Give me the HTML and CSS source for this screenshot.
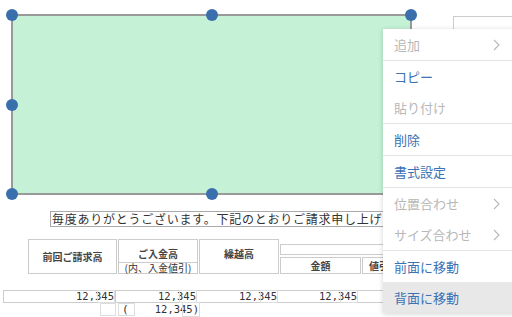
FILE: index.html
```html
<!DOCTYPE html>
<html lang="ja">
<head>
    <meta charset="UTF-8">
    <title>帳票デザイナー</title>
    <link rel="stylesheet" href="styles.css">
</head>
<body>
    <div class="canvas">
        <div class="frame-box"></div>

        <!-- 帳票本体 -->
        <div class="greeting">毎度ありがとうございます。下記のとおりご請求申し上げます。</div>

        <div class="head-row">
            <div class="cell c-prev">前回ご請求高</div>
            <div class="cell c-paid">
                <span class="c-label">ご入金高</span>
                <span class="c-sub">(内、入金値引)</span>
            </div>
            <div class="cell c-carry">繰越高</div>
            <div class="c-group">
                <div class="strip"></div>
                <div class="sub-row">
                    <div class="cell c-amount">金額</div>
                    <div class="cell c-disc">値引</div>
                </div>
            </div>
        </div>

        <div class="val-row">
            <div class="val v1">12,3<span class="tail">45</span></div>
            <div class="val v2">12,3<span class="tail">45</span></div>
            <div class="val v3">12,3<span class="tail">45</span></div>
            <div class="val v4">12,3<span class="tail">45</span></div>
        </div>
        <div class="val-row2">
            <div class="mini"></div>
            <div class="mini paren">(</div>
            <div class="val v5">12,34<span class="tail">5)</span></div>
        </div>

        <!-- 選択中の図形 -->
        <div class="shape">
            <span class="handle tl"></span>
            <span class="handle tm"></span>
            <span class="handle tr"></span>
            <span class="handle ml"></span>
            <span class="handle mr"></span>
            <span class="handle bl"></span>
            <span class="handle bm"></span>
            <span class="handle br"></span>
        </div>

        <!-- コンテキストメニュー -->
        <ul class="menu">
            <li class="item disabled">追加<svg class="chev" viewBox="0 0 7 12"><polyline points="1,1 6,6 1,11"/></svg></li>
            <li class="item sep">コピー</li>
            <li class="item disabled">貼り付け</li>
            <li class="item sep">削除</li>
            <li class="item sep">書式設定</li>
            <li class="item sep disabled">位置合わせ<svg class="chev" viewBox="0 0 7 12"><polyline points="1,1 6,6 1,11"/></svg></li>
            <li class="item disabled">サイズ合わせ<svg class="chev" viewBox="0 0 7 12"><polyline points="1,1 6,6 1,11"/></svg></li>
            <li class="item sep">前面に移動</li>
            <li class="item hover">背面に移動</li>
        </ul>
    </div>
</body>
</html>
```

FILE: styles.css
```css
body {
    margin: 0;
    background: #fff;
    overflow: hidden;
    font-family: "Noto Sans CJK JP", "Noto Sans", sans-serif;
    color: #222;
}

.canvas {
    position: relative;
    width: 512px;
    height: 317px;
    overflow: hidden;
}

.frame-box {
    position: absolute;
    left: 453px;
    top: 16px;
    width: 80px;
    height: 40px;
    border: 1px solid #ccc;
}

.greeting {
    position: absolute;
    left: 50px;
    top: 211px;
    width: 360px;
    height: 16px;
    box-sizing: border-box;
    border: 1px solid #aaa;
    padding-left: 1px;
    font-size: 12px;
    line-height: 14px;
    letter-spacing: 0.75px;
    white-space: nowrap;
    color: #333;
}

.head-row {
    position: absolute;
    left: 28px;
    top: 239px;
    display: flex;
    gap: 1px;
}

.cell {
    box-sizing: border-box;
    border: 1px solid #ccc;
    display: flex;
    align-items: center;
    justify-content: center;
    font-size: 10px;
    color: #444;
    font-weight: bold;
}

.c-prev {
    width: 89px;
    height: 35px;
}

.c-paid {
    width: 80px;
    height: 35px;
    flex-direction: column;
    justify-content: flex-end;
}

.c-label {
    flex: 1;
    display: flex;
    align-items: center;
    padding-top: 4px;
}

.c-sub {
    width: 100%;
    box-sizing: border-box;
    border-top: 1px solid #ccc;
    height: 11px;
    line-height: 10px;
    text-align: center;
    font-weight: normal;
    color: #333;
}

.c-carry {
    width: 80px;
    height: 35px;
    padding-bottom: 6px;
}

.c-group {
    display: flex;
    flex-direction: column;
    gap: 2px;
    padding-top: 5px;
}

.strip {
    width: 140px;
    height: 11px;
    box-sizing: border-box;
    border: 1px solid #ccc;
}

.sub-row {
    display: flex;
    gap: 1px;
}

.c-amount {
    width: 81px;
    height: 17px;
}

.c-disc {
    width: 60px;
    height: 17px;
    justify-content: flex-start;
    padding-left: 6px;
}

.val-row {
    position: absolute;
    left: 3px;
    top: 290px;
    width: 400px;
    height: 13px;
    box-sizing: border-box;
    border-top: 1px solid #ccc;
    border-bottom: 1px solid #ccc;
    display: flex;
}

.val {
    font-family: "DejaVu Sans Mono", monospace;
    font-size: 10.5px;
    line-height: 11px;
    text-align: right;
    color: #333;
    box-sizing: border-box;
}

.v1 {
    width: 113px;
    border-left: 1px solid #ccc;
    border-right: 1px solid #ccc;
    padding-right: 1px;
}

.v2 {
    width: 78px;
    margin-left: 2px;
}

.v3 {
    width: 78px;
    margin-left: 3px;
}

.v4 {
    width: 78px;
    margin-left: 2px;
}

.tail {
    display: inline-block;
    margin-left: -3px;
    padding-left: 3px;
    outline: 1px solid #ddd;
}

.val-row2 {
    position: absolute;
    left: 100px;
    top: 303px;
    display: flex;
    gap: 2px;
    height: 13px;
}

.mini {
    width: 16px;
    box-sizing: border-box;
    border: 1px solid #ddd;
    font-family: "DejaVu Sans Mono", monospace;
    font-size: 11px;
    line-height: 11px;
    color: #333;
}

.paren {
    width: 17px;
    padding-left: 3px;
}

.v5 {
    width: 62px;
    line-height: 13px;
}

.shape {
    position: absolute;
    left: 11px;
    top: 14px;
    width: 401px;
    height: 181px;
    box-sizing: border-box;
    border: 2px solid #999;
    background: #c5f1d7;
}

.handle {
    position: absolute;
    width: 12px;
    height: 12px;
    border-radius: 50%;
    background: #3a6fae;
}

.handle.tl { left: -7px; top: -7px; }
.handle.tm { left: calc(50% - 6px); top: -7px; }
.handle.tr { right: -7px; top: -7px; }
.handle.ml { left: -7px; top: calc(50% - 6px); }
.handle.mr { right: -7px; top: calc(50% - 6px); }
.handle.bl { left: -7px; bottom: -7px; }
.handle.bm { left: calc(50% - 6px); bottom: -7px; }
.handle.br { right: -7px; bottom: -7px; }

.menu {
    position: absolute;
    left: 383px;
    top: 29px;
    width: 140px;
    margin: 0;
    padding: 0;
    list-style: none;
    background: #fff;
    box-shadow: 0 1px 5px rgba(0, 0, 0, 0.18);
}

.item {
    position: relative;
    height: 31px;
    line-height: 31px;
    padding-left: 11px;
    font-size: 13px;
    color: #3b72b3;
}

.item.sep {
    border-top: 1px solid #e4e4e4;
}

.item.disabled {
    color: #b8b8b8;
}

.item.hover {
    background: #e8e8e8;
}

.chev {
    position: absolute;
    left: 110px;
    top: 10px;
    width: 7px;
    height: 12px;
    fill: none;
    stroke: #b8b8b8;
    stroke-width: 1.1;
}
```
